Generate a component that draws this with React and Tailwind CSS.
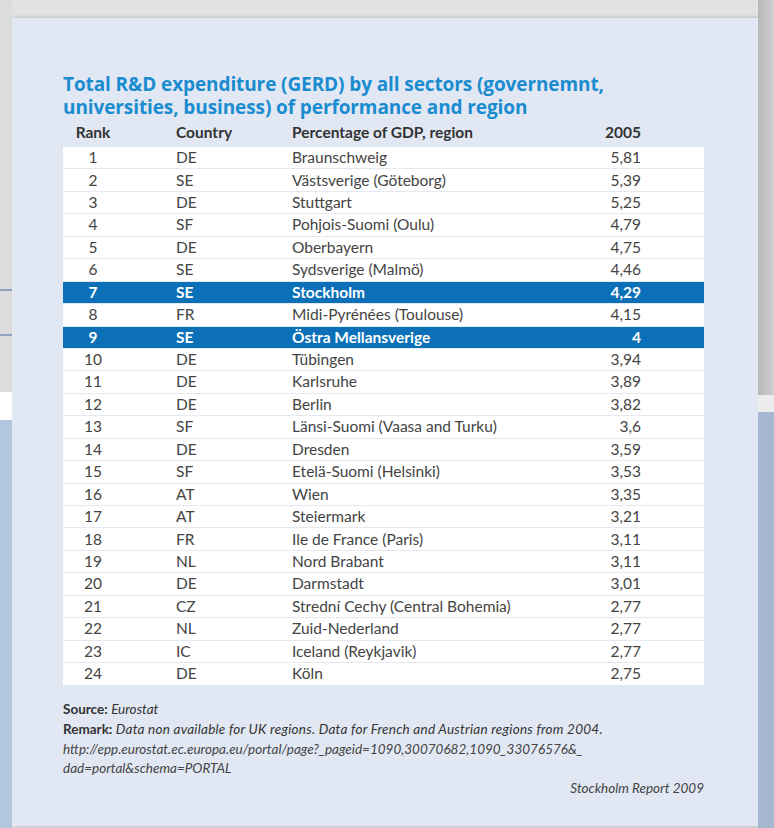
const rows = [
  [1, "DE", "Braunschweig", "5,81"],
  [2, "SE", "Västsverige (Göteborg)", "5,39"],
  [3, "DE", "Stuttgart", "5,25"],
  [4, "SF", "Pohjois-Suomi (Oulu)", "4,79"],
  [5, "DE", "Oberbayern", "4,75"],
  [6, "SE", "Sydsverige (Malmö)", "4,46"],
  [7, "SE", "Stockholm", "4,29", true],
  [8, "FR", "Midi-Pyrénées (Toulouse)", "4,15"],
  [9, "SE", "Östra Mellansverige", "4", true],
  [10, "DE", "Tübingen", "3,94"],
  [11, "DE", "Karlsruhe", "3,89"],
  [12, "DE", "Berlin", "3,82"],
  [13, "SF", "Länsi-Suomi (Vaasa and Turku)", "3,6"],
  [14, "DE", "Dresden", "3,59"],
  [15, "SF", "Etelä-Suomi (Helsinki)", "3,53"],
  [16, "AT", "Wien", "3,35"],
  [17, "AT", "Steiermark", "3,21"],
  [18, "FR", "Ile de France (Paris)", "3,11"],
  [19, "NL", "Nord Brabant", "3,11"],
  [20, "DE", "Darmstadt", "3,01"],
  [21, "CZ", "Strední Cechy (Central Bohemia)", "2,77"],
  [22, "NL", "Zuid-Nederland", "2,77"],
  [23, "IC", "Iceland (Reykjavik)", "2,77"],
  [24, "DE", "Köln", "2,75"],
];

export default function App() {
  return (
    <div className="flex h-[828px] w-[774px] overflow-hidden bg-[#e2e2e2] font-['Lato',sans-serif]">
      {/* left edge of the page behind */}
      <div className="flex w-[12px] shrink-0 flex-col">
        <div className="h-[289px] bg-[#dcdcdc]" />
        <div className="h-[2px] bg-[#8ea3bd]" />
        <div className="h-[43px] bg-[#dcdcdc]" />
        <div className="h-[2px] bg-[#8ea3bd]" />
        <div className="h-[56px] bg-[#dcdcdc]" />
        <div className="h-[28px] bg-white" />
        <div className="flex-1 bg-[#b3c6e0]" />
      </div>

      {/* panel */}
      <div className="mt-[18px] h-[808px] w-[746px] shrink-0 bg-[#e1e8f4] pl-[51px] pr-[54px] pt-[55px] shadow-[3px_0_4px_rgba(0,0,0,0.25)]">
        <h1 className="font-['Open_Sans',sans-serif] text-[19px] font-bold leading-[23px] tracking-[-0.1px] text-[#1a8ccf]">
          <span className="block">Total R&amp;D expenditure (GERD) by all sectors (governemnt,</span>
          <span className="block">universities, business) of performance and region</span>
        </h1>

        <div className="flex h-[28px] items-center text-[15.5px] font-bold text-[#333]">
          <div className="w-[60px] text-center">Rank</div>
          <div className="ml-[53px] w-[116px]">Country</div>
          <div className="flex-1">Percentage of GDP, region</div>
          <div className="pr-[63px] text-right">2005</div>
        </div>

        <div className="bg-white">
          {rows.map(([rank, country, region, value, hl]) => (
            <div
              key={rank}
              className={
                hl
                  ? "flex h-[22.45px] items-center border-b border-[#e4e9f1] bg-[#0b70b8] text-[15.5px] font-bold text-white"
                  : "flex h-[22.45px] items-center border-b border-[#e4e9f1] text-[15.5px] text-[#444]"
              }
            >
              <div className="w-[60px] text-center">{rank}</div>
              <div className="ml-[53px] w-[116px]">{country}</div>
              <div className="flex-1">{region}</div>
              <div className="pr-[63px] text-right">{value}</div>
            </div>
          ))}
        </div>

        <div className="mt-[13px] text-[13.5px] leading-[20px] text-[#333]">
          <p>
            <span className="font-bold">Source:</span>{" "}
            <span className="italic">Eurostat</span>
          </p>
          <p>
            <span className="font-bold">Remark:</span>{" "}
            <span className="italic tracking-[0.25px]">
              Data non available for UK regions. Data for French and Austrian regions from 2004.
            </span>
          </p>
          <p className="mt-[1px] italic leading-[19px] text-[#444]">
            http://epp.eurostat.ec.europa.eu/portal/page?_pageid=1090,30070682,1090_33076576&amp;_
            <br />
            dad=portal&amp;schema=PORTAL
          </p>
          <p className="text-right italic text-[#444]">Stockholm Report 2009</p>
        </div>
      </div>

      {/* right edge of the page behind */}
      <div className="flex flex-1 flex-col">
        <div className="h-[395px] bg-[linear-gradient(to_right,#b8b8b8,#cfcfcf)]" />
        <div className="h-[17px] bg-[#ececec]" />
        <div className="flex-1 bg-[#a6b7d1]" />
      </div>
    </div>
  );
}
